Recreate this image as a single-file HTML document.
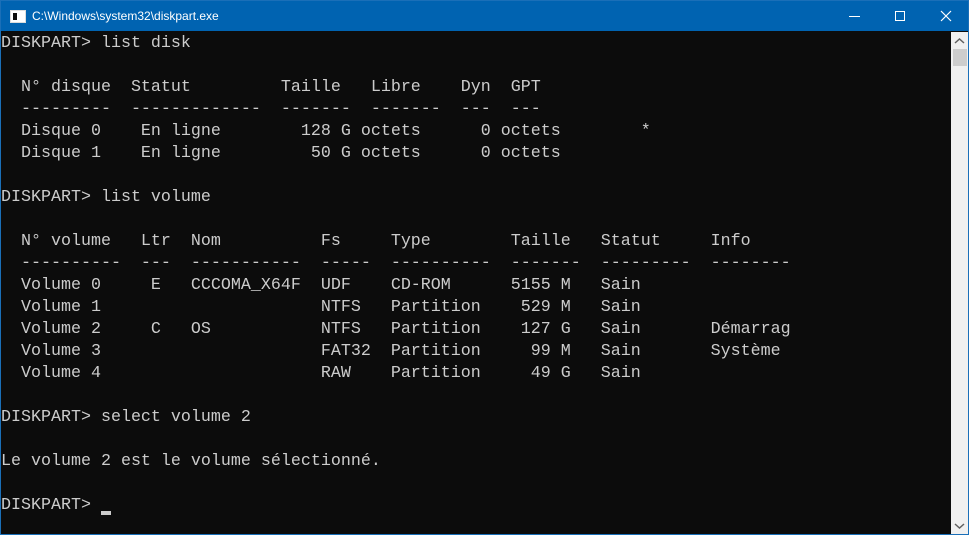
<!DOCTYPE html>
<html><head><meta charset="utf-8"><style>
html,body{margin:0;padding:0;width:969px;height:535px;overflow:hidden;background:#0c0c0c}
.win{position:absolute;left:0;top:0;width:967px;height:533px;border:1px solid #1a6fb8;background:#0c0c0c}
.tb{position:absolute;left:0;top:0;width:967px;height:30px;background:#0063b1;color:#fff;font:12px "Liberation Sans",sans-serif}
.tb .t{position:absolute;left:31px;top:8px}
.ic{position:absolute;left:9px;top:9px;width:14px;height:11px;background:#fff;border:1px solid #ddd}
.ic:after{content:"";position:absolute;left:2px;top:2px;width:4px;height:7px;background:#0c0c0c}
pre{position:absolute;left:0;top:32px;margin:0;font:16.67px/22px "Liberation Mono",monospace;color:#cccccc}
.sb{position:absolute;left:950px;top:31px;width:17px;height:502px;background:#f0f0f0}
.th{position:absolute;left:952px;top:48px;width:14px;height:17px;background:#cdcdcd}
.cur{position:absolute;left:100px;top:510px;width:10px;height:4px;background:#cccccc}
</style></head><body>
<div class="win">
<div class="tb"><div class="ic"></div><span class="t">C:\Windows\system32\diskpart.exe</span>
<svg style="position:absolute;left:820px;top:0" width="147" height="30">
<line x1="28" y1="15.5" x2="39" y2="15.5" stroke="#fff" stroke-width="1"/>
<rect x="74.5" y="10.5" width="9" height="9" fill="none" stroke="#fff"/>
<path d="M120 10L130 20M130 10L120 20" stroke="#fff" stroke-width="1.2"/>
</svg></div>
<pre>DISKPART&gt; list disk

  N° disque  Statut         Taille   Libre    Dyn  GPT
  ---------  -------------  -------  -------  ---  ---
  Disque 0    En ligne        128 G octets      0 octets        *
  Disque 1    En ligne         50 G octets      0 octets

DISKPART&gt; list volume

  N° volume   Ltr  Nom          Fs     Type        Taille   Statut     Info
  ----------  ---  -----------  -----  ----------  -------  ---------  --------
  Volume 0     E   CCCOMA_X64F  UDF    CD-ROM      5155 M   Sain
  Volume 1                      NTFS   Partition    529 M   Sain
  Volume 2     C   OS           NTFS   Partition    127 G   Sain       Démarrag
  Volume 3                      FAT32  Partition     99 M   Sain       Système
  Volume 4                      RAW    Partition     49 G   Sain

DISKPART&gt; select volume 2

Le volume 2 est le volume sélectionné.

DISKPART&gt; </pre>
<div class="cur"></div>
<div class="sb">
<svg width="17" height="502" style="position:absolute;left:0;top:0">
<path d="M4 11L8.5 7L13 11" fill="none" stroke="#606060" stroke-width="1.5"/>
<path d="M4 492L8.5 496L13 492" fill="none" stroke="#606060" stroke-width="1.5"/>
</svg></div>
<div class="th"></div>
</div>
</body></html>
